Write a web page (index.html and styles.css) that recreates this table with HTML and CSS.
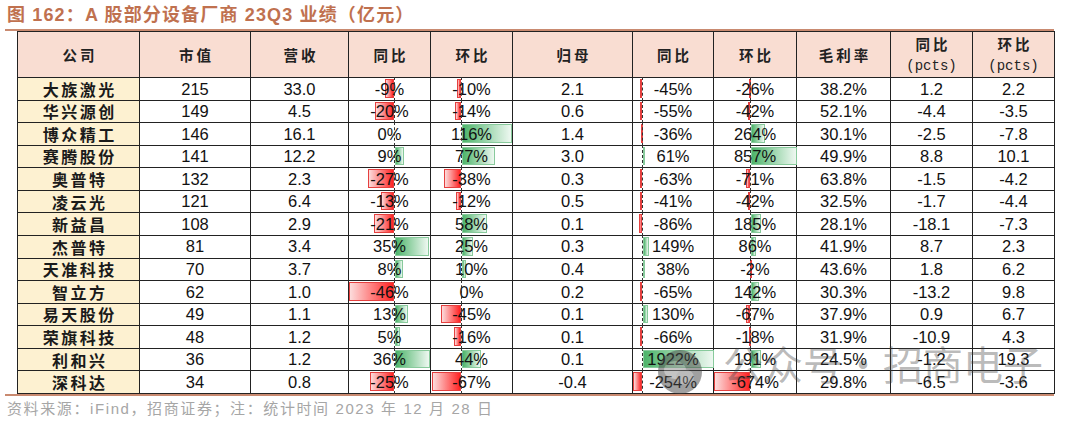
FILE: index.html
```html
<!DOCTYPE html>
<html lang="zh-CN">
<head>
<meta charset="utf-8">
<title>A 股部分设备厂商 23Q3 业绩</title>
<link rel="stylesheet" href="styles.css">
</head>
<body>
<h1 class="title">图 162：A 股部分设备厂商 23Q3 业绩（亿元）</h1>
<div class="frame">
<table>
<colgroup>
<col style="width:122px"><col style="width:111px"><col style="width:98px"><col style="width:82px"><col style="width:82px"><col style="width:120px"><col style="width:81px"><col style="width:83px"><col style="width:94px"><col style="width:82px"><col style="width:82px">
</colgroup>
<thead>
<tr><th>公司</th><th>市值</th><th>营收</th><th>同比</th><th>环比</th><th>归母</th><th>同比</th><th>环比</th><th>毛利率</th><th>同比<br><span class="pcts">(pcts)</span></th><th>环比<br><span class="pcts">(pcts)</span></th></tr>
</thead>
<tbody>
<tr><td class="name">大族激光</td><td>215</td><td>33.0</td><td class="bc c1"><i class="bar neg" style="--v:-9"></i><span>-9%</span></td><td class="bc c2"><i class="bar neg" style="--v:-10"></i><span>-10%</span></td><td>2.1</td><td class="bc c3"><i class="bar neg" style="--v:-45"></i><span>-45%</span></td><td class="bc c4"><i class="bar neg" style="--v:-26"></i><span>-26%</span></td><td>38.2%</td><td>1.2</td><td>2.2</td></tr>
<tr><td class="name">华兴源创</td><td>149</td><td>4.5</td><td class="bc c1"><i class="bar neg" style="--v:-20"></i><span>-20%</span></td><td class="bc c2"><i class="bar neg" style="--v:-14"></i><span>-14%</span></td><td>0.6</td><td class="bc c3"><i class="bar neg" style="--v:-55"></i><span>-55%</span></td><td class="bc c4"><i class="bar neg" style="--v:-42"></i><span>-42%</span></td><td>52.1%</td><td>-4.4</td><td>-3.5</td></tr>
<tr><td class="name">博众精工</td><td>146</td><td>16.1</td><td class="bc c1"><span>0%</span></td><td class="bc c2"><i class="bar pos" style="--v:116"></i><span>116%</span></td><td>1.4</td><td class="bc c3"><i class="bar neg" style="--v:-36"></i><span>-36%</span></td><td class="bc c4"><i class="bar pos" style="--v:264"></i><span>264%</span></td><td>30.1%</td><td>-2.5</td><td>-7.8</td></tr>
<tr><td class="name">赛腾股份</td><td>141</td><td>12.2</td><td class="bc c1"><i class="bar pos" style="--v:9"></i><span>9%</span></td><td class="bc c2"><i class="bar pos" style="--v:77"></i><span>77%</span></td><td>3.0</td><td class="bc c3"><i class="bar pos" style="--v:61"></i><span>61%</span></td><td class="bc c4"><i class="bar pos" style="--v:857"></i><span>857%</span></td><td>49.9%</td><td>8.8</td><td>10.1</td></tr>
<tr><td class="name">奥普特</td><td>132</td><td>2.3</td><td class="bc c1"><i class="bar neg" style="--v:-27"></i><span>-27%</span></td><td class="bc c2"><i class="bar neg" style="--v:-38"></i><span>-38%</span></td><td>0.3</td><td class="bc c3"><i class="bar neg" style="--v:-63"></i><span>-63%</span></td><td class="bc c4"><i class="bar neg" style="--v:-71"></i><span>-71%</span></td><td>63.8%</td><td>-1.5</td><td>-4.2</td></tr>
<tr><td class="name">凌云光</td><td>121</td><td>6.4</td><td class="bc c1"><i class="bar neg" style="--v:-13"></i><span>-13%</span></td><td class="bc c2"><i class="bar neg" style="--v:-12"></i><span>-12%</span></td><td>0.5</td><td class="bc c3"><i class="bar neg" style="--v:-41"></i><span>-41%</span></td><td class="bc c4"><i class="bar neg" style="--v:-42"></i><span>-42%</span></td><td>32.5%</td><td>-1.7</td><td>-4.4</td></tr>
<tr><td class="name">新益昌</td><td>108</td><td>2.9</td><td class="bc c1"><i class="bar neg" style="--v:-21"></i><span>-21%</span></td><td class="bc c2"><i class="bar pos" style="--v:58"></i><span>58%</span></td><td>0.1</td><td class="bc c3"><i class="bar neg" style="--v:-86"></i><span>-86%</span></td><td class="bc c4"><i class="bar pos" style="--v:185"></i><span>185%</span></td><td>28.1%</td><td>-18.1</td><td>-7.3</td></tr>
<tr><td class="name">杰普特</td><td>81</td><td>3.4</td><td class="bc c1"><i class="bar pos" style="--v:35"></i><span>35%</span></td><td class="bc c2"><i class="bar pos" style="--v:25"></i><span>25%</span></td><td>0.3</td><td class="bc c3"><i class="bar pos" style="--v:149"></i><span>149%</span></td><td class="bc c4"><i class="bar pos" style="--v:86"></i><span>86%</span></td><td>41.9%</td><td>8.7</td><td>2.3</td></tr>
<tr><td class="name">天准科技</td><td>70</td><td>3.7</td><td class="bc c1"><i class="bar pos" style="--v:8"></i><span>8%</span></td><td class="bc c2"><i class="bar pos" style="--v:10"></i><span>10%</span></td><td>0.4</td><td class="bc c3"><i class="bar pos" style="--v:38"></i><span>38%</span></td><td class="bc c4"><i class="bar neg" style="--v:-2"></i><span>-2%</span></td><td>43.6%</td><td>1.8</td><td>6.2</td></tr>
<tr><td class="name">智立方</td><td>62</td><td>1.0</td><td class="bc c1"><i class="bar neg" style="--v:-46"></i><span>-46%</span></td><td class="bc c2"><span>0%</span></td><td>0.2</td><td class="bc c3"><i class="bar neg" style="--v:-65"></i><span>-65%</span></td><td class="bc c4"><i class="bar pos" style="--v:142"></i><span>142%</span></td><td>30.3%</td><td>-13.2</td><td>9.8</td></tr>
<tr><td class="name">易天股份</td><td>49</td><td>1.1</td><td class="bc c1"><i class="bar pos" style="--v:13"></i><span>13%</span></td><td class="bc c2"><i class="bar neg" style="--v:-45"></i><span>-45%</span></td><td>0.1</td><td class="bc c3"><i class="bar pos" style="--v:130"></i><span>130%</span></td><td class="bc c4"><i class="bar neg" style="--v:-67"></i><span>-67%</span></td><td>37.9%</td><td>0.9</td><td>6.7</td></tr>
<tr><td class="name">荣旗科技</td><td>48</td><td>1.2</td><td class="bc c1"><i class="bar pos" style="--v:5"></i><span>5%</span></td><td class="bc c2"><i class="bar neg" style="--v:-16"></i><span>-16%</span></td><td>0.1</td><td class="bc c3"><i class="bar neg" style="--v:-66"></i><span>-66%</span></td><td class="bc c4"><i class="bar neg" style="--v:-18"></i><span>-18%</span></td><td>31.9%</td><td>-10.9</td><td>4.3</td></tr>
<tr><td class="name">利和兴</td><td>36</td><td>1.2</td><td class="bc c1"><i class="bar pos" style="--v:36"></i><span>36%</span></td><td class="bc c2"><i class="bar pos" style="--v:44"></i><span>44%</span></td><td>0.1</td><td class="bc c3"><i class="bar pos" style="--v:1922"></i><span>1922%</span></td><td class="bc c4"><i class="bar pos" style="--v:191"></i><span>191%</span></td><td>24.5%</td><td>-1.2</td><td>19.3</td></tr>
<tr><td class="name">深科达</td><td>34</td><td>0.8</td><td class="bc c1"><i class="bar neg" style="--v:-25"></i><span>-25%</span></td><td class="bc c2"><i class="bar neg" style="--v:-67"></i><span>-67%</span></td><td>-0.4</td><td class="bc c3"><i class="bar neg" style="--v:-254"></i><span>-254%</span></td><td class="bc c4"><i class="bar neg" style="--v:-674"></i><span>-674%</span></td><td>29.8%</td><td>-6.5</td><td>-3.6</td></tr>
</tbody>
</table>
<svg class="wm-icon" width="56" height="48" viewBox="0 0 56 48" aria-hidden="true">
<circle cx="28" cy="24" r="22" fill="#444"/>
<ellipse cx="23" cy="22" rx="11" ry="9" fill="#8a8a8a"/>
<ellipse cx="33" cy="29" rx="9" ry="7.5" fill="#7a7a7a"/>
</svg>
<span class="wm-text">公众号·招商电子</span>
</div>
<p class="source">资料来源：iFind，招商证券；注：统计时间 2023 年 12 月 28 日</p>
</body>
</html>
```
FILE: styles.css
```css
* { box-sizing: border-box; }
body {
  margin: 0;
  background: #fff;
  font-family: "Liberation Sans", "Noto Sans CJK SC", sans-serif;
  color: #111;
}
.title {
  margin: 0;
  height: 29px;
  padding-left: 7px;
  font-size: 18px;
  line-height: 31px;
  font-weight: bold;
  color: #c0714f;
  font-family: "Liberation Sans", "Noto Sans CJK SC", sans-serif;
  letter-spacing: 1.15px;
  white-space: nowrap;
}
.frame {
  position: relative;
  margin-left: 5px;
  width: 1049px;
  border-top: 2px solid #c98a70;
  border-bottom: 2px solid #c98a70;
  padding-left: 12px;
}
table {
  border-collapse: collapse;
  table-layout: fixed;
  width: 1037px;
}
th, td {
  border: 1px solid #222;
  padding: 0;
  text-align: center;
  vertical-align: middle;
}
thead th {
  height: 46px;
  background: #f9ddd2;
  font-family: "Noto Sans CJK SC", sans-serif;
  font-weight: 700;
  font-size: 14.5px;
  line-height: 20px;
  letter-spacing: 3px;
  text-indent: 3px;
  color: #222;
}
.pcts {
  font-family: "Liberation Mono", monospace;
  font-weight: normal;
  font-size: 14px;
  letter-spacing: 0;
}
tbody td {
  height: 22.57px;
  font-size: 16.5px;
  line-height: 1;
  color: #111;
}
td.name {
  background: #fdf1d1;
  font-family: "Noto Sans CJK SC", sans-serif;
  font-weight: 700;
  font-size: 16px;
  letter-spacing: 2.5px;
  text-indent: 2.5px;
  color: #1a1a1a;
}
td.bc { position: relative; }
td.bc span { position: relative; z-index: 1; }
td.bc::before {
  content: "";
  position: absolute;
  top: -1px;
  bottom: -1px;
  left: var(--axis);
  border-left: 1px dashed #333;
  z-index: 2;
}
.c1 { --axis: 45px; --k: 0.97px; }
.c2 { --axis: 30px; --k: 0.435px; }
.c3 { --axis: 9px; --k: 0.037px; }
.c4 { --axis: 36px; --k: 0.054px; }
.bar {
  position: absolute;
  top: 1px;
  bottom: 2px;
  display: block;
}
.bar.neg {
  left: calc(var(--axis) + var(--v) * var(--k));
  width: calc(var(--v) * var(--k) * -1);
  background: linear-gradient(to right, #fcdcdc, #ff2424);
  border: 1px solid #e5403f;
}
.bar.pos {
  left: calc(var(--axis) + 1px);
  width: calc(var(--v) * var(--k));
  background: linear-gradient(to right, #4db46a, #eef8f1);
  border: 1px solid #88ca9c;
}
.wm-icon {
  position: absolute;
  left: 647px;
  top: 317px;
  opacity: 0.5;
  pointer-events: none;
  z-index: 5;
}
.wm-text {
  position: absolute;
  left: 718px;
  top: 312px;
  font-family: "Noto Sans CJK SC", sans-serif;
  font-size: 40px;
  line-height: 1;
  color: rgba(60, 60, 60, 0.36);
  white-space: nowrap;
  pointer-events: none;
  z-index: 5;
}
.source {
  margin: 0;
  padding: 3px 0 0 7px;
  font-size: 15px;
  line-height: 20px;
  color: #a6a6a6;
  letter-spacing: 1.6px;
}
```
